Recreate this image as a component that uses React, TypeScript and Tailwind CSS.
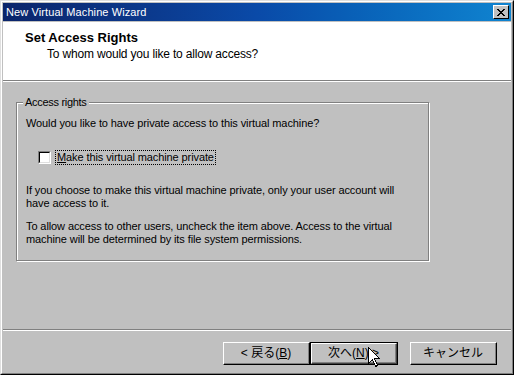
import React from "react";

const font = { fontFamily: '"Liberation Sans", Arial, "Noto Sans CJK JP", sans-serif' };

function Btn({ children, isDefault }: { children: React.ReactNode; isDefault?: boolean }) {
  if (isDefault) {
    return (
      <div className="w-[88px] h-[23px] border border-black">
        <div className="w-full h-full border-t border-l border-white border-r border-b border-r-[#404040] border-b-[#404040]">
          <div className="w-full h-full border-r border-b border-[#808080] flex items-center justify-center text-[12px] text-black">
            {children}
          </div>
        </div>
      </div>
    );
  }
  return (
    <div className="w-[87px] h-[23px] border-t border-l border-white border-r border-b border-r-black border-b-black">
      <div className="w-full h-full border-r border-b border-[#808080] flex items-center justify-center text-[12px] text-black">
        {children}
      </div>
    </div>
  );
}

function Cursor() {
  return (
    <svg width="13" height="21" viewBox="0 0 13 21" className="absolute left-[368px] top-[347px]">
      <path
        d="M0.5 0.5 L0.5 16.5 L4.5 12.5 L7.5 19.5 L9.5 18.5 L6.5 11.5 L11.5 11.5 Z"
        fill="white"
        stroke="black"
        strokeWidth="1"
        shapeRendering="crispEdges"
      />
    </svg>
  );
}

export default function App() {
  return (
    <div className="relative w-[514px] h-[375px] bg-[#c0c0c0]" style={font}>
      <div className="w-full h-full border-t border-l border-[#dfdfdf] border-r border-b border-r-black border-b-black">
        <div className="w-full h-full border-t border-l border-white border-r border-b border-r-[#808080] border-b-[#808080] p-px flex flex-col">
          {/* title bar */}
          <div className="h-[18px] shrink-0 bg-gradient-to-r from-[#0a246a] via-[#0a4aa8] to-[#1084d0] flex items-center justify-between pl-[3px] pr-[2px]">
            <span className="text-white text-[11px] leading-none tracking-[0.1px] whitespace-nowrap">New Virtual Machine Wizard</span>
            <div className="w-[16px] h-[14px] bg-[#c0c0c0] border-t border-l border-white border-r border-b border-r-black border-b-black flex items-center justify-center">
              <svg width="8" height="7" viewBox="0 0 8 7" shapeRendering="crispEdges">
                <path d="M0 0h2v1h-2z M6 0h2v1h-2z M1 1h2v1h-2z M5 1h2v1h-2z M2 2h4v1h-4z M3 3h2v1h-2z M2 4h4v1h-4z M1 5h2v1h-2z M5 5h2v1h-2z M0 6h2v1h-2z M6 6h2v1h-2z" fill="black" />
              </svg>
            </div>
          </div>
          <div className="h-px shrink-0" />
          {/* header */}
          <div className="h-[58px] shrink-0 bg-white pl-[22px] pt-[8px]">
            <div className="text-[13px] font-bold text-black leading-[15px] whitespace-nowrap">Set Access Rights</div>
            <div className="text-[12px] tracking-[-0.18px] text-black leading-[14px] mt-[2px] pl-[22px] whitespace-nowrap">To whom would you like to allow access?</div>
          </div>
          <div className="h-px shrink-0 bg-[#808080]" />
          <div className="h-px shrink-0 bg-white" />
          {/* body */}
          <div className="flex-1 flex flex-col">
            <div className="pl-[13px] pt-[20px]">
              <div className="relative w-[413px] h-[159px] border border-[#808080] shadow-[1px_1px_0_0_white,inset_1px_1px_0_0_white]">
                <div className="absolute left-[6px] -top-[8px] bg-[#c0c0c0] px-[2px] text-[11px] tracking-[-0.3px] leading-[14px] text-black whitespace-nowrap">Access rights</div>
                <div className="pl-[9px] pt-[14px] text-[11px] tracking-[-0.1px] leading-[13px] text-black whitespace-nowrap">
                  <div>Would you like to have private access to this virtual machine?</div>
                  <div className="flex items-center mt-[20px] pl-[12px] h-[15px]">
                    <div className="w-[13px] h-[13px] border-t border-l border-[#808080] border-r border-b border-r-white border-b-white">
                      <div className="w-full h-full border-t border-l border-black border-r border-b border-r-[#dfdfdf] border-b-[#dfdfdf] bg-white" />
                    </div>
                    <div className="ml-[4px] px-[1px] border border-dotted border-black leading-[13px]">
                      <span className="underline">M</span>ake this virtual machine private
                    </div>
                  </div>
                  <div className="mt-[19px]">
                    If you choose to make this virtual machine private, only your user account will
                    <br />
                    have access to it.
                  </div>
                  <div className="mt-[10px]">
                    To allow access to other users, uncheck the item above. Access to the virtual
                    <br />
                    machine will be determined by its file system permissions.
                  </div>
                </div>
              </div>
            </div>
            <div className="flex-1" />
            <div className="h-px bg-[#808080]" />
            <div className="h-px bg-white" />
            <div className="flex items-start pt-[11px] pb-[7px] pl-[220px]">
              <Btn>&lt; 戻る(<span className="underline">B</span>)</Btn>
              <Btn isDefault>次へ(<span className="underline">N</span>) &gt;</Btn>
              <div className="w-[12px]" />
              <Btn>キャンセル</Btn>
            </div>
          </div>
        </div>
      </div>
      <Cursor />
    </div>
  );
}
